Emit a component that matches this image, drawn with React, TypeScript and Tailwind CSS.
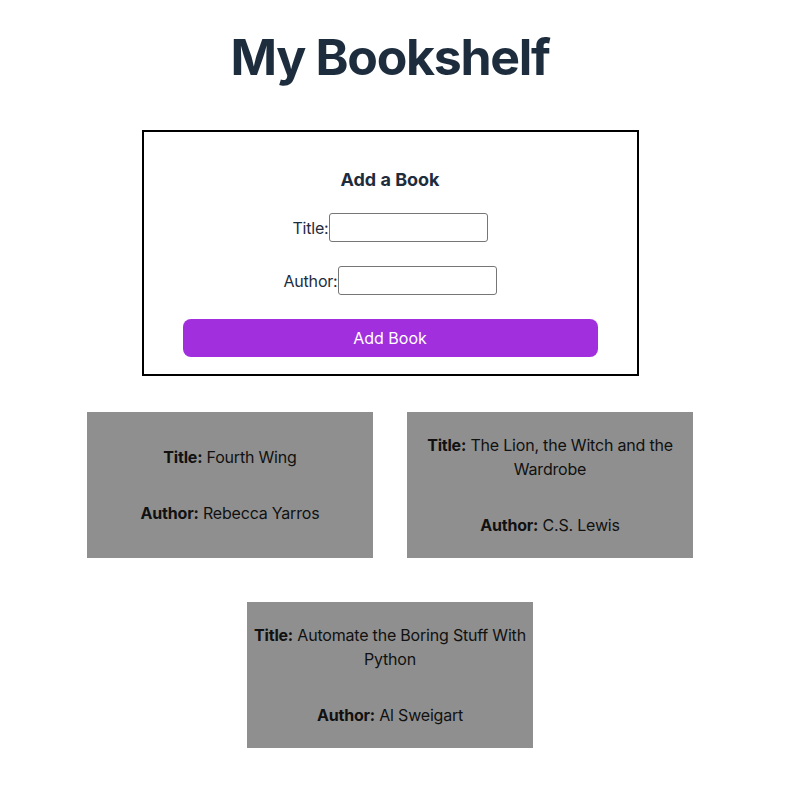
import React from "react";

const books = [
  { title: "Fourth Wing", author: "Rebecca Yarros" },
  { title: "The Lion, the Witch and the Wardrobe", author: "C.S. Lewis" },
  { title: "Automate the Boring Stuff With Python", author: "Al Sweigart" },
];

function Card({ title, author }: { title: string; author: string }) {
  return (
    <div className="w-[286px] h-[146px] bg-[#8f8f8f] px-0.5 flex flex-col justify-center items-center text-center text-[16px] leading-6 tracking-[-0.2px] text-[#111]">
      <p>
        <span className="font-bold">Title:</span> {title}
      </p>
      <p className="mt-8">
        <span className="font-bold">Author:</span> {author}
      </p>
    </div>
  );
}

export default function App() {
  return (
    <div
      className="w-[780px] bg-white min-h-[810px]"
      style={{ fontFamily: "Inter, 'Noto Sans', sans-serif" }}
    >
      <h1 className="text-center text-[50px] font-bold tracking-[-1.3px] text-[#1e2d3d] leading-none pt-[32px]">
        My Bookshelf
      </h1>
      <div className="mt-[48px] mx-auto w-[497px] border-2 border-black flex flex-col items-center pt-[34px] pb-[17px] px-[39px] text-[#1e2d3d]">
        <h2 className="text-[18px] font-bold leading-7">Add a Book</h2>
        <div className="mt-[19px] flex items-center text-[16px] tracking-[-0.2px]">
          <label>Title:</label>
          <input className="w-[159px] h-[29px] border border-[#767676] rounded-[3px] bg-white" />
        </div>
        <div className="mt-[24px] flex items-center text-[16px] tracking-[-0.2px]">
          <label>Author:</label>
          <input className="w-[159px] h-[29px] border border-[#767676] rounded-[3px] bg-white" />
        </div>
        <button className="mt-[24px] w-full h-[38px] rounded-[8px] bg-[#a12fdd] text-white text-[16px]">
          Add Book
        </button>
      </div>
      <div className="mt-[36px] flex flex-wrap justify-center gap-x-[34px] gap-y-[44px] w-[640px] mx-auto">
        {books.map((b) => (
          <Card key={b.title} title={b.title} author={b.author} />
        ))}
      </div>
    </div>
  );
}
